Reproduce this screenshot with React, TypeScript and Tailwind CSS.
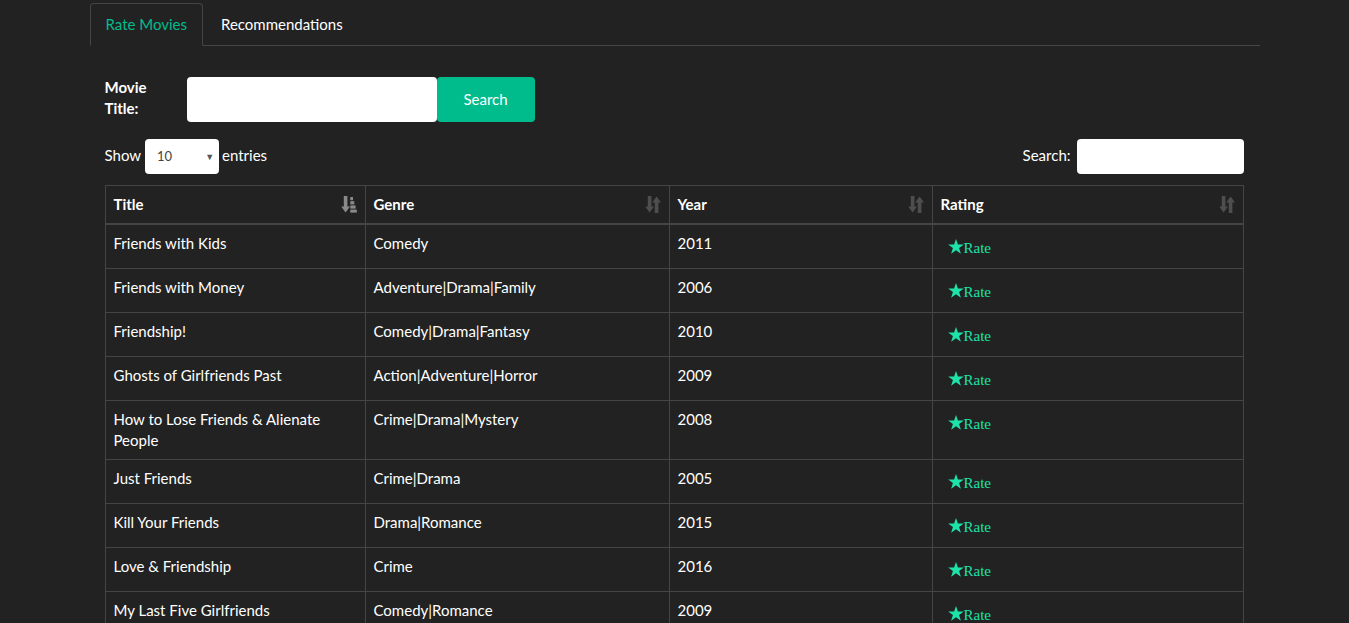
import React from 'react';

type Movie = { title: string; genre: string; year: number };

const movies: Movie[] = [
  { title: 'Friends with Kids', genre: 'Comedy', year: 2011 },
  { title: 'Friends with Money', genre: 'Adventure|Drama|Family', year: 2006 },
  { title: 'Friendship!', genre: 'Comedy|Drama|Fantasy', year: 2010 },
  { title: 'Ghosts of Girlfriends Past', genre: 'Action|Adventure|Horror', year: 2009 },
  { title: 'How to Lose Friends & Alienate People', genre: 'Crime|Drama|Mystery', year: 2008 },
  { title: 'Just Friends', genre: 'Crime|Drama', year: 2005 },
  { title: 'Kill Your Friends', genre: 'Drama|Romance', year: 2015 },
  { title: 'Love & Friendship', genre: 'Crime', year: 2016 },
  { title: 'My Last Five Girlfriends', genre: 'Comedy|Romance', year: 2009 },
  { title: 'Shaun of the Dead', genre: 'Comedy|Horror', year: 2004 },
];

const SortBoth = () => (
  <svg width="16" height="17" viewBox="0 0 16 17" className="text-[#4e4e4e] shrink-0">
    <path d="M2.8 0h3.6v10.5H9L4.6 16.5 0.2 10.5h2.6z" fill="currentColor" />
    <path d="M9.8 17h3.6V6.5H16L11.6 0.5 7.2 6.5h2.6z" fill="currentColor" />
  </svg>
);

const SortAsc = () => (
  <svg width="16" height="17" viewBox="0 0 16 17" className="text-[#8a8a8a] shrink-0">
    <path d="M2.8 0h3.6v10.5H9L4.6 16.5 0.2 10.5h2.6z" fill="currentColor" />
    <rect x="9.3" y="1" width="2.7" height="3.2" fill="currentColor" />
    <rect x="9.3" y="5.2" width="4" height="3.2" fill="currentColor" />
    <rect x="9.3" y="9.4" width="5.3" height="3.2" fill="currentColor" />
    <rect x="9.3" y="13.6" width="6.5" height="3" fill="currentColor" />
  </svg>
);

const Star = () => (
  <svg width="16" height="15" viewBox="0 0 24 23" className="shrink-0">
    <path d="M12 0l2.9 8.3H24l-7.3 5.4 2.8 8.8L12 17.1l-7.5 5.4 2.8-8.8L0 8.3h9.1z" fill="#1ee3a9" />
  </svg>
);

const Th: React.FC<{ label: string; asc?: boolean }> = ({ label, asc }) => (
  <th className="border border-[#464545] border-b-2 px-2 py-2 text-left font-bold align-top">
    <div className="flex items-center justify-between">
      <span>{label}</span>
      {asc ? <SortAsc /> : <SortBoth />}
    </div>
  </th>
);

export default function App() {
  return (
    <div
      className="min-h-screen bg-[#222222] text-white text-[15px] leading-[21px]"
      style={{ fontFamily: 'Lato, "Liberation Sans", sans-serif' }}
    >
      <div className="w-[1170px] mx-auto pt-[3px]">
        <ul className="flex border-b border-[#464545]">
          <li className="-mb-px">
            <a className="block px-[15px] py-[10px] border border-[#464545] border-b-[#222222] rounded-t-[4px] bg-[#222222] text-[#00bc8c]">
              Rate Movies
            </a>
          </li>
          <li className="ml-[2px] -mb-px">
            <a className="block px-[15px] py-[10px] border border-transparent text-white">Recommendations</a>
          </li>
        </ul>

        <div className="px-[15px] pt-[31px]">
          <div className="flex items-start">
            <label className="w-[82px] font-bold">
              Movie
              <br />
              Title:
            </label>
            <div className="w-[250px] h-[45px] bg-white rounded-[4px]" />
            <button className="w-[98px] h-[45px] bg-[#00bc8c] rounded-[4px] text-white">Search</button>
          </div>

          <div className="flex items-center justify-between mt-[17px] w-[1139px]">
            <div className="flex items-center">
              <span className="-mt-[2px]">Show</span>
              <div className="ml-[4px] w-[74px] h-[35px] bg-white rounded-[4px] flex items-center justify-between pl-[12px] pr-[5px] text-[#444] text-[13px]">
                <span>10</span>
                <span className="text-[9px] text-[#555]">▼</span>
              </div>
              <span className="ml-[3px] -mt-[2px]">entries</span>
            </div>
            <div className="flex items-center">
              <span className="-mt-[2px]">Search:</span>
              <div className="ml-[6px] w-[167px] h-[35px] bg-white rounded-[4px]" />
            </div>
          </div>

          <table className="mt-[11px] w-[1138px] table-fixed border-collapse border border-[#464545]">
            <colgroup>
              <col className="w-[260px]" />
              <col className="w-[304px]" />
              <col className="w-[263px]" />
              <col className="w-[311px]" />
            </colgroup>
            <thead>
              <tr>
                <Th label="Title" asc />
                <Th label="Genre" />
                <Th label="Year" />
                <Th label="Rating" />
              </tr>
            </thead>
            <tbody>
              {movies.map((m) => (
                <tr key={m.title}>
                  <td className="border border-[#464545] px-2 py-2 align-top">{m.title}</td>
                  <td className="border border-[#464545] px-2 py-2 align-top">{m.genre}</td>
                  <td className="border border-[#464545] px-2 py-2 align-top">{m.year}</td>
                  <td className="border border-[#464545] px-2 py-2 align-top">
                    <a className="h-[27px] pl-[7px] pt-[6px] flex items-start text-[#1ee3a9]">
                      <Star />
                      <span
                        className="text-[15px] leading-[17px] mt-[1px]"
                        style={{ fontFamily: '"Liberation Serif", serif' }}
                      >
                        Rate
                      </span>
                    </a>
                  </td>
                </tr>
              ))}
            </tbody>
          </table>
        </div>
      </div>
    </div>
  );
}
